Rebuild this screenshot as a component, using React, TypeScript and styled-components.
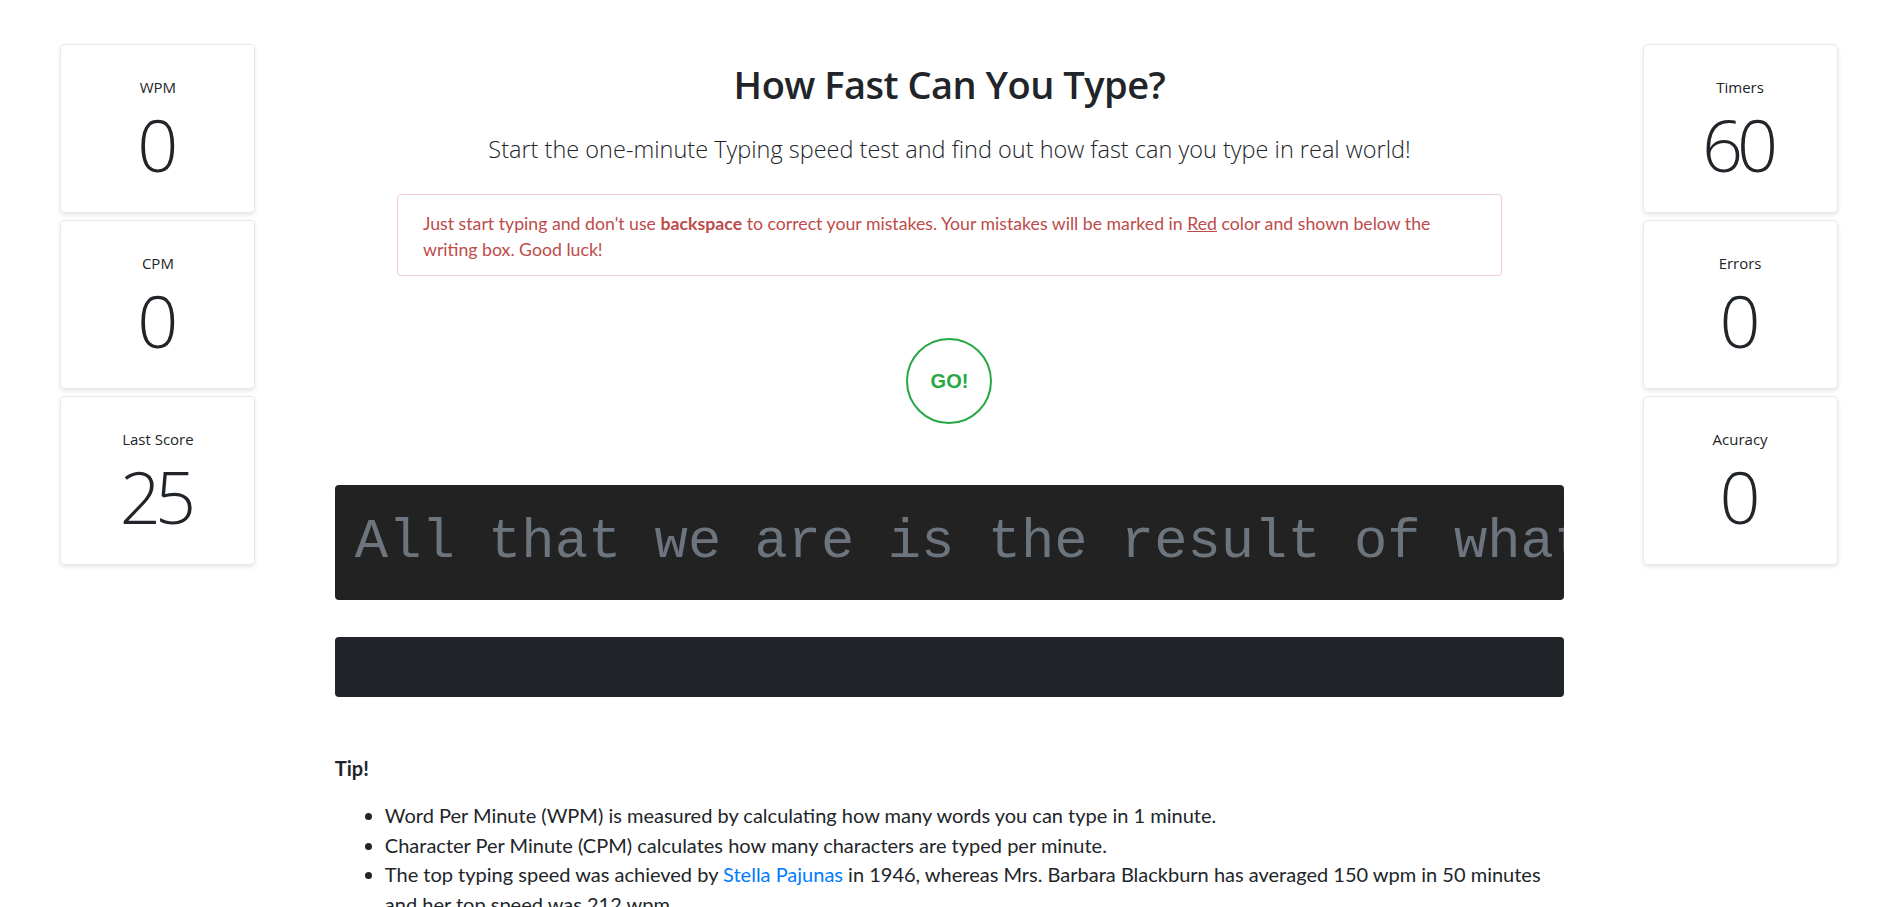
import React from "react";
import styled, { createGlobalStyle } from "styled-components";

const GlobalStyle = createGlobalStyle`
  html, body {
    margin: 0;
    padding: 0;
    background: #ffffff;
    color: #212529;
    font-family: "Open Sans", "Noto Sans", sans-serif;
  }
  * { box-sizing: border-box; }
`;

const Page = styled.div`
  display: grid;
  grid-template-columns: minmax(0, 2fr) minmax(0, 8fr) minmax(0, 2fr);
  width: 100%;
  min-height: 907px;
`;

const SideColumn = styled.aside<{ $shift?: number }>`
  display: flex;
  flex-direction: column;
  align-items: center;
  gap: 7px;
  padding-top: 44px;
  padding-left: ${(p) => (p.$shift ? `${p.$shift}px` : "0")};
`;

const StatCard = styled.div`
  width: 195px;
  height: 169px;
  display: flex;
  flex-direction: column;
  align-items: center;
  padding-top: 31px;
  background: #fff;
  border: 1px solid rgba(0, 0, 0, 0.09);
  border-radius: 5px;
  box-shadow: 0 2px 4px rgba(0, 0, 0, 0.1);
`;

const StatLabel = styled.div`
  font-family: "Open Sans", sans-serif;
  font-size: 15px;
  line-height: 22px;
  color: #212529;
`;

const StatValue = styled.div`
  margin-top: 3px;
  margin-left: -6px;
  font-family: "Open Sans", sans-serif;
  font-weight: 300;
  font-size: 72px;
  line-height: 86px;
  letter-spacing: -6px;
  color: #212529;
`;

const Main = styled.main`
  min-width: 0;
  display: flex;
  flex-direction: column;
  align-items: center;
  padding: 60px 15px 0 19px;
`;

const Title = styled.h1`
  margin: 0;
  font-family: "Open Sans", sans-serif;
  font-weight: 600;
  font-size: 38px;
  line-height: 48px;
  letter-spacing: -0.5px;
  color: #212529;
`;

const Lead = styled.p`
  margin: 25px 0 0;
  font-family: "Open Sans", sans-serif;
  font-weight: 300;
  font-size: 23.5px;
  line-height: 32px;
  color: #212529;
`;

const Notice = styled.div`
  margin-top: 29px;
  width: 1105px;
  padding: 16px 25px 11px;
  border: 1px solid #f3ccd3;
  border-radius: 4px;
  font-family: "Lato", sans-serif;
  font-size: 17.7px;
  line-height: 26.4px;
  color: #bd4b4b;

  strong { font-weight: 700; }
  u { text-decoration: underline; }
`;

const GoButton = styled.button`
  margin-top: 62px;
  width: 86px;
  height: 86px;
  border-radius: 50%;
  border: 2px solid #28a745;
  background: #fff;
  color: #28a745;
  font-family: "Liberation Sans", Arial, sans-serif;
  font-weight: 700;
  font-size: 20px;
  padding: 2px 0 0;
  cursor: pointer;
`;

const Quote = styled.div`
  margin-top: 61px;
  align-self: stretch;
  min-width: 0;
  height: 115px;
  padding: 0 20px;
  display: flex;
  align-items: center;
  background: #222222;
  border-radius: 4px;
  overflow: hidden;
  white-space: nowrap;
  font-family: "Liberation Mono", "Courier New", monospace;
  font-size: 55.5px;
  color: #6c757d;
`;

const TypingInput = styled.div`
  margin-top: 37px;
  align-self: stretch;
  height: 60px;
  background: #212529;
  border-radius: 4px;
`;

const Tips = styled.section`
  margin-top: 57px;
  align-self: stretch;
  font-family: "Lato", sans-serif;
  font-size: 20px;
  color: #212529;
`;

const TipTitle = styled.div`
  font-weight: 700;
  line-height: 29px;
`;

const TipList = styled.ul`
  margin: 18px 0 0;
  padding-left: 50px;
  line-height: 29.8px;
`;

const Link = styled.a`
  color: #007bff;
  text-decoration: none;
`;

const leftStats = [
  { label: "WPM", value: "0" },
  { label: "CPM", value: "0" },
  { label: "Last Score", value: "25" },
];

const rightStats = [
  { label: "Timers", value: "60" },
  { label: "Errors", value: "0" },
  { label: "Acuracy", value: "0" },
];

export default function App() {
  return (
    <>
      <GlobalStyle />
      <Page>
        <SideColumn>
          {leftStats.map((s) => (
            <StatCard key={s.label}>
              <StatLabel>{s.label}</StatLabel>
              <StatValue>{s.value}</StatValue>
            </StatCard>
          ))}
        </SideColumn>
        <Main>
          <Title>How Fast Can You Type?</Title>
          <Lead>
            Start the one-minute Typing speed test and find out how fast can you type in real world!
          </Lead>
          <Notice>
            Just start typing and don't use <strong>backspace</strong> to correct your mistakes. Your
            mistakes will be marked in <u>Red</u> color and shown below the writing box. Good luck!
          </Notice>
          <GoButton>GO!</GoButton>
          <Quote>All that we are is the result of what we have thought.</Quote>
          <TypingInput />
          <Tips>
            <TipTitle>Tip!</TipTitle>
            <TipList>
              <li>Word Per Minute (WPM) is measured by calculating how many words you can type in 1 minute.</li>
              <li>Character Per Minute (CPM) calculates how many characters are typed per minute.</li>
              <li>
                The top typing speed was achieved by <Link href="#">Stella Pajunas</Link> in 1946, whereas
                Mrs. Barbara Blackburn has averaged 150 wpm in 50 minutes and her top speed was 212 wpm.
              </li>
            </TipList>
          </Tips>
        </Main>
        <SideColumn $shift={6}>
          {rightStats.map((s) => (
            <StatCard key={s.label}>
              <StatLabel>{s.label}</StatLabel>
              <StatValue>{s.value}</StatValue>
            </StatCard>
          ))}
        </SideColumn>
      </Page>
    </>
  );
}
